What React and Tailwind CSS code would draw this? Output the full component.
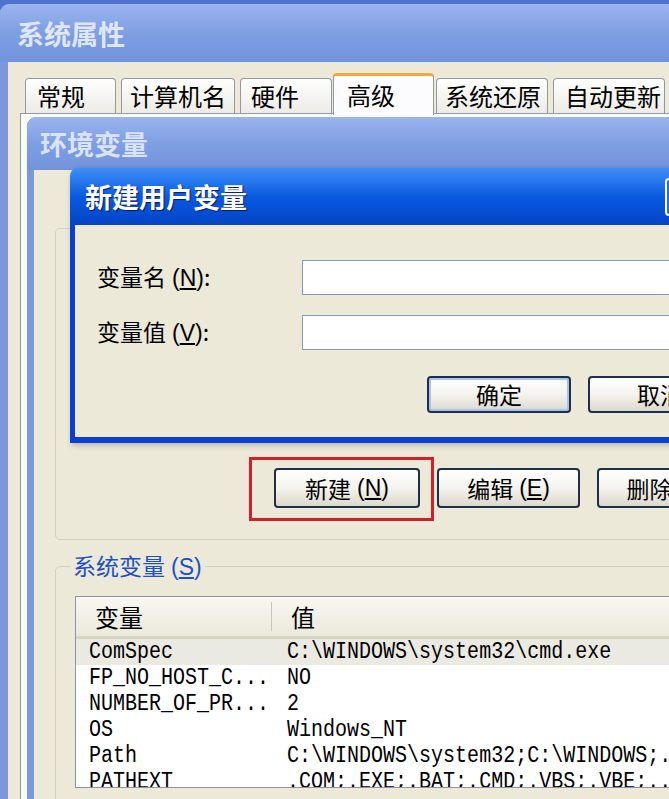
import React from 'react'

const tabs = [
  { label: '常规', cls: 'w-[91px] mr-[5px] pl-[11px]' },
  { label: '计算机名', cls: 'w-[114px] mr-[5px] pl-[8px]' },
  { label: '硬件', cls: 'w-[92px] mr-[1px] pl-[10px]' },
  { label: '高级', cls: 'w-[101px] mr-[2px] pl-[13px]', active: true },
  { label: '系统还原', cls: 'w-[112px] mr-[5px] pl-[8px]' },
  { label: '自动更新', cls: 'w-[112px] mr-[4px] pl-[11px]' },
  { label: '', cls: 'w-[60px]' },
]

const rows = [
  ['ComSpec', 'C:\\WINDOWS\\system32\\cmd.exe'],
  ['FP_NO_HOST_C...', 'NO'],
  ['NUMBER_OF_PR...', '2'],
  ['OS', 'Windows_NT'],
  ['Path', 'C:\\WINDOWS\\system32;C:\\WINDOWS;..'],
  ['PATHEXT', '.COM;.EXE;.BAT;.CMD;.VBS;.VBE;...'],
]

function XpButton({ children, isDefault, className = '' }) {
  return (
    <div
      className={
        'flex shrink-0 items-center justify-center rounded-[4px] border-2 border-[#1d2f4a] bg-gradient-to-b from-[#ffffff] via-[#f4f3ee] to-[#dcd8cb] text-[23px] text-black ' +
        (isDefault ? 'shadow-[inset_0_0_0_2px_#a9c2f2] ' : '') +
        className
      }
    >
      {children}
    </div>
  )
}

function Key({ k }) {
  return (
    <span className="ml-[6px] font-['Liberation_Sans_Narrow','Liberation_Sans',sans-serif]">
      (<span className="underline">{k}</span>)
    </span>
  )
}

function Mono({ children }) {
  return (
    <span className="inline-block origin-left scale-x-[0.87] whitespace-nowrap font-['Liberation_Mono',monospace] text-[23px] leading-[26px] text-black">
      {children}
    </span>
  )
}

export default function App() {
  return (
    <div className="relative h-[799px] w-[669px] overflow-hidden bg-[#4f72cf] font-['Noto_Sans_CJK_SC',sans-serif]">
      {/* 系统属性 */}
      <div className="mt-[4px] flex h-[795px] flex-col overflow-hidden rounded-tl-[9px] bg-[#7b98dc]">
        <div className="flex h-[58px] shrink-0 items-center bg-gradient-to-b from-[#9ab4ee] via-[#7f9fe3] to-[#7193db] pl-[17px]">
          <span className="text-[27px] font-bold leading-none text-[#dfe7f7]">系统属性</span>
        </div>
        <div className="flex flex-1">
          <div className="w-[8px] shrink-0 bg-[#7b98dc]" />
          <div className="flex flex-1 flex-col bg-[#ece9d8] pl-[12px] pt-[11px]">
            <div className="relative z-10 -mb-[2px] flex h-[42px] items-end pl-[5px]">
              {tabs.map((t, i) =>
                t.active ? (
                  <div
                    key={i}
                    className={'flex h-[42px] shrink-0 items-start rounded-t-[4px] border-x border-t-[3px] border-x-[#919b9c] border-t-[#f0a83a] bg-[#fcfcfe] pt-[4px] text-[24px] leading-[30px] text-black ' + t.cls}
                  >
                    {t.label}
                  </div>
                ) : (
                  <div
                    key={i}
                    className={'mb-[2px] flex h-[35px] shrink-0 items-center rounded-t-[4px] border-x border-t border-[#919b9c] bg-gradient-to-b from-[#ffffff] to-[#ecebe5] text-[24px] leading-none text-black ' + t.cls}
                  >
                    {t.label}
                  </div>
                )
              )}
            </div>
            <div className="flex flex-1 flex-col border-l border-t border-[#919b9c] bg-[#fbfbf8] pl-[6px] pt-[3px]">
              {/* 环境变量 */}
              <div className="flex flex-1 flex-col overflow-hidden rounded-tl-[9px] bg-[#7a98dc]">
                <div className="flex h-[53px] shrink-0 items-center bg-gradient-to-b from-[#9ab4ee] via-[#7f9fe3] to-[#7193db] pl-[13px]">
                  <span className="text-[27px] font-bold leading-none text-[#d9e3f5]">环境变量</span>
                </div>
                <div className="flex flex-1">
                  <div className="w-[7px] shrink-0 bg-[#7a98dc]" />
                  <div className="flex flex-1 flex-col bg-[#ece9d8] pl-[21px] pt-[58px]">
                    <div className="flex h-[312px] items-end gap-[17px] rounded-[5px] border border-[#d0d0bf] pb-[31px] pl-[218px]">
                      <div className="relative">
                        <XpButton className="h-[40px] w-[146px]">
                          新建<Key k="N" />
                        </XpButton>
                        <span className="absolute -left-[25px] -top-[11px] h-[64px] w-[185px] border-[3px] border-[#d4202a]" />
                      </div>
                      <XpButton className="h-[40px] w-[143px]">
                        编辑<Key k="E" />
                      </XpButton>
                      <XpButton className="h-[40px] w-[143px]">
                        删除<Key k="D" />
                      </XpButton>
                    </div>
                    <fieldset className="mt-[12px] rounded-[5px] border border-[#d0d0bf] pb-[20px]">
                      <legend className="ml-[14px] px-[3px] text-[23px] leading-[26px] text-[#1d50c9]">
                        系统变量<Key k="S" />
                      </legend>
                      <div className="ml-[19px] mt-[16px] h-[192px] overflow-hidden border border-[#8a94a6] bg-white">
                        <div className="flex h-[42px] border-b-[3px] border-[#d8d4c4] bg-gradient-to-b from-[#f8f7f2] to-[#ebe9dc] text-[24px] text-black">
                          <div className="flex w-[195px] shrink-0 items-center pl-[19px]">变量</div>
                          <div className="my-[5px] w-px bg-[#c9c6b5]" />
                          <div className="flex items-center pl-[19px]">值</div>
                        </div>
                        {rows.map(([n, v], i) => (
                          <div key={i} className={'flex h-[26px] items-center overflow-hidden ' + (i === 0 ? 'bg-[#ebeae2]' : '')}>
                            <div className="w-[196px] shrink-0 overflow-hidden pl-[13px]">
                              <Mono>{n}</Mono>
                            </div>
                            <div className="overflow-hidden whitespace-nowrap pl-[15px]">
                              <Mono>{v}</Mono>
                            </div>
                          </div>
                        ))}
                      </div>
                    </fieldset>
                  </div>
                </div>
              </div>
            </div>
          </div>
        </div>
      </div>

      {/* 新建用户变量 */}
      <div className="absolute left-[70px] top-[168px] flex w-[640px] flex-col overflow-hidden rounded-t-[8px] shadow-[2px_2px_6px_rgba(0,0,0,0.25)]">
        <div className="flex h-[57px] shrink-0 items-center bg-gradient-to-b from-[#3d8ff7] via-[#0a5ae0] to-[#0444c6] pl-[15px] pr-[9px]">
          <span className="text-[27px] font-bold leading-none text-white [text-shadow:1px_1px_1px_#0a1a60]">新建用户变量</span>
          <div className="ml-auto h-[38px] w-[36px] rounded-[4px] border-2 border-white bg-[#2a66e8]" />
        </div>
        <div className="bg-[#0b3fd3] pb-[6px] pl-[5px]">
          <div className="h-[212px] bg-[#ece9d8] pl-[22px] pt-[35px] text-[23px] text-black">
            <div className="flex h-[35px] items-center">
              <div className="w-[205px] shrink-0">
                变量名<Key k="N" />:
              </div>
              <div className="h-[35px] w-[420px] border border-[#7f9db9] bg-white" />
            </div>
            <div className="mt-[20px] flex h-[35px] items-center">
              <div className="w-[205px] shrink-0">
                变量值<Key k="V" />:
              </div>
              <div className="h-[35px] w-[420px] border border-[#7f9db9] bg-white" />
            </div>
            <div className="mt-[26px] flex gap-[17px] pl-[330px]">
              <XpButton isDefault className="h-[37px] w-[144px]">确定</XpButton>
              <XpButton className="h-[37px] w-[144px]">取消</XpButton>
            </div>
          </div>
        </div>
      </div>
    </div>
  )
}
